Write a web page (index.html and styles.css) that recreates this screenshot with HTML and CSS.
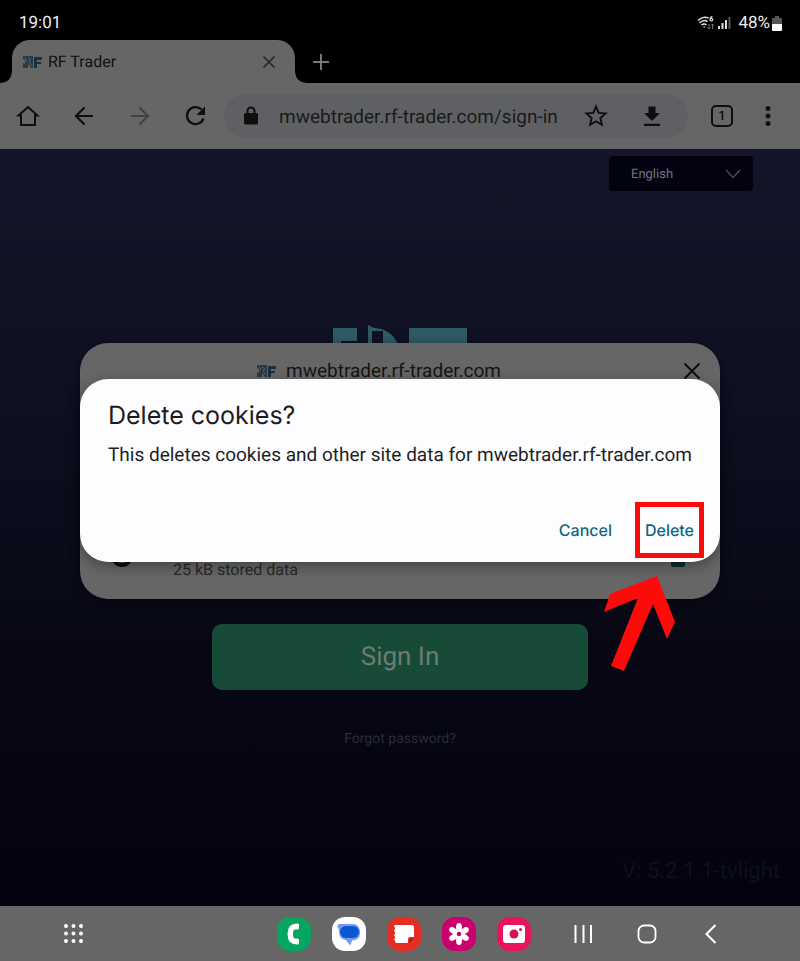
FILE: index.html
```
<!DOCTYPE html>
<html lang="en">
<head>
    <meta charset="UTF-8">
    <meta name="viewport" content="width=device-width, initial-scale=1.0">
    <title>RF Trader</title>
    <link rel="stylesheet" href="styles.css">
</head>
<body>
    <div class="screen">
        <div class="status-bar">
            <span class="clock">19:01</span>
            <div class="status-icons">
                <svg width="18" height="16" viewBox="0 0 18 16" fill="none" stroke="#ddd" stroke-width="1.5">
                    <path d="M1 5.5Q6 0.5 11.5 3M2.5 8Q6.500 4 10.500 6.500M4.500 10.300Q7 8 9.500 10"/>
                    <path d="M6 11.500L7.200 13L8.400 11.500Z" fill="#ddd" stroke="none"/>
                    <path d="M15.500 1.500Q13 1.800 13 4.500M13 4.700a1.300 1.300 0 1 0 2.600 0a1.300 1.300 0 1 0 -2.600 0" stroke-width="1.200"/>
                    <path d="M12 9v5M10.500 12.500L12 14L13.500 12.500M15.500 14V9M14 10.500L15.500 9L17 10.500" stroke="#777" stroke-width="1"/>
                </svg>
                <svg width="14" height="16" viewBox="0 0 14 16">
                    <path d="M1 11h2v3H1zM4.500 8h2v6h-2zM8 5h2v9H8z" fill="#ddd"/>
                    <path d="M11.500 2h2v12h-2z" fill="#555"/>
                </svg>
                <span class="battery-level">48%</span>
                <svg width="10" height="15" viewBox="0 0 10 15">
                    <path d="M3 0h4v2h2q1 0 1 1v5H0V3q0-1 1-1h2z" fill="#555"/>
                    <path d="M0 8h10v6q0 1-1 1H1q-1 0-1-1z" fill="#fff"/>
                </svg>
            </div>
        </div>

        <div class="tab-strip">
            <div class="tab">
                <svg class="favicon" width="20" height="12" viewBox="0 0 20 12">
                    <path d="M0 0h10v12H8L5 8v4H0V7l2 1V4L0 3z" fill="#2c3944"/>
                    <path d="M2 2l2 4M5 2l3 2-2 2 3 4" stroke="#56616a" fill="none"/>
                    <path d="M11 1h8v3h-5v2h4v2h-4v4h-3z" fill="#16323f"/>
                </svg>
                <span class="tab-title">RF Trader</span>
                <button class="icon-btn tab-close" aria-label="Close tab">
                    <svg width="24" height="24" viewBox="0 0 24 24" fill="none" stroke="#252525" stroke-width="1.600"><path d="M6.500 6.500L17.500 17.500M17.500 6.500L6.500 17.500"/></svg>
                </button>
            </div>
            <button class="icon-btn" aria-label="New tab">
                <svg width="24" height="24" viewBox="0 0 24 24" fill="none" stroke="#777" stroke-width="2"><path d="M12 4v16M4 12h16"/></svg>
            </button>
        </div>

        <div class="toolbar">
            <div class="toolbar-nav">
                <button class="icon-btn" aria-label="Home">
                    <svg width="24" height="24" viewBox="0 0 24 24" fill="none" stroke="#0e0e0e" stroke-width="2"><path d="M2.500 11.500L12 3l9.500 8.500H19V21H5V11.500z"/></svg>
                </button>
                <button class="icon-btn" aria-label="Back">
                    <svg width="24" height="24" viewBox="0 0 24 24" fill="none" stroke="#0e0e0e" stroke-width="2.200"><path d="M21 12H4M12.500 3.500L4 12l8.500 8.500"/></svg>
                </button>
                <button class="icon-btn" aria-label="Forward">
                    <svg width="24" height="24" viewBox="0 0 24 24" fill="none" stroke="#414141" stroke-width="2"><path d="M3 12h17M11.500 3.500L20 12l-8.500 8.500"/></svg>
                </button>
                <button class="icon-btn" aria-label="Reload">
                    <svg width="24" height="24" viewBox="0 0 24 24"><path d="M17.500 5.500A8.500 8.500 0 1 0 19.500 14.500" fill="none" stroke="#0e0e0e" stroke-width="2.300"/><path d="M21 2.500v8.500H12.500z" fill="#0e0e0e"/></svg>
                </button>
            </div>
            <div class="omnibox">
                <svg width="24" height="24" viewBox="0 0 24 24"><path d="M6.500 9h11q1.500 0 1.500 1.500v8.500q0 1.500-1.500 1.500h-11q-1.500 0-1.500-1.500V10.500q0-1.500 1.500-1.500z" fill="#0e0e0e"/><path d="M8.500 9V7a3.500 3.500 0 0 1 7 0V9" fill="none" stroke="#0e0e0e" stroke-width="2"/></svg>
                <input class="url" type="text" aria-label="Address" value="mwebtrader.rf-trader.com/sign-in">
                <button class="icon-btn" aria-label="Bookmark">
                    <svg width="24" height="24" viewBox="0 0 24 24" fill="none" stroke="#0e0e0e" stroke-width="1.900"><path d="M12 2.500l2.700 6.400 6.900.6-5.200 4.600 1.500 6.800L12 17.300l-5.900 3.600 1.500-6.800-5.200-4.600 6.900-.6z"/></svg>
                </button>
                <button class="icon-btn" aria-label="Download">
                    <svg width="24" height="24" viewBox="0 0 24 24" fill="#0e0e0e"><path d="M8.500 2.500h7V9H20l-8 8-8-8h4.500zM4 19.700h16v2.200H4z"/></svg>
                </button>
            </div>
            <button class="icon-btn tab-count" aria-label="Open tabs">1</button>
            <button class="icon-btn" aria-label="Menu">
                <svg width="24" height="24" viewBox="0 0 24 24" fill="#0e0e0e"><circle cx="12" cy="4.500" r="2.500"/><circle cx="12" cy="12" r="2.500"/><circle cx="12" cy="19.500" r="2.500"/></svg>
            </button>
        </div>

        <main class="page">
            <div class="language">
                <select class="language-select" aria-label="Language">
                    <option>English</option>
                </select>
                <svg class="language-arrow" width="16" height="10" viewBox="0 0 16 10" fill="none" stroke="#4a4a55" stroke-width="1.500"><path d="M1 1l7 7.500L15 1"/></svg>
            </div>
            <svg class="logo" width="134" height="60" viewBox="0 0 134 60" fill="#305b66">
                <path d="M0 3h24v13H8v6h12v10H8v26H0z"/>
                <path d="M35 -1Q38 3 42 3Q62 5 66 24L66 60H50V6H39V60H35z"/>
                <path d="M76 3h58v15H112v42H96V18H76z"/>
            </svg>
            <button class="sign-in">Sign In</button>
            <a class="forgot" href="#">Forgot password?</a>
            <div class="version">V: 5.2.1.1-tvlight</div>
        </main>

        <nav class="taskbar">
            <button class="icon-btn all-apps" aria-label="All apps">
                <svg width="24" height="24" viewBox="0 0 24 24" fill="#fff"><circle cx="4" cy="4" r="2"/><circle cx="11.500" cy="4" r="2"/><circle cx="19" cy="4" r="2"/><circle cx="4" cy="11.500" r="2"/><circle cx="11.500" cy="11.500" r="2"/><circle cx="19" cy="11.500" r="2"/><circle cx="4" cy="19" r="2"/><circle cx="11.500" cy="19" r="2"/><circle cx="19" cy="19" r="2"/></svg>
            </button>
            <div class="apps">
                <button class="app app-phone" aria-label="Phone">
                    <svg width="34" height="34" viewBox="0 0 34 34"><path d="M20 6.500h.5q1.500 0 1.500 1.500v3q0 1.500-1.500 1.500H18q-2 0-2 4.500t2 4.500h2.500q1.500 0 1.500 1.500v3q0 1.500-1.500 1.500H20q-9.500 0-9.500-10.500T20 6.500z" fill="#fff"/></svg>
                </button>
                <button class="app app-messages" aria-label="Messages">
                    <svg width="34" height="34" viewBox="0 0 34 34"><path d="M7 7h14q4 0 6 3.500 1.500 3 1 6.500-1 6-8 6.500l-1.500 5-5-5.500Q7 22 7 14q0-2-1.500-4.500Q5 7.500 7 7z" fill="#6f9df0"/><rect x="8" y="9" width="19" height="12" rx="6" fill="#0b57d0"/></svg>
                </button>
                <button class="app app-notes" aria-label="Notes">
                    <svg width="34" height="34" viewBox="0 0 34 34"><path d="M10 8h15q2 0 2 2v10h-4q-2 0-2 2v4H10q-2 0-2-2 0-1-1-1.500 0-1 1-1v-2q-1-.500-1-1.500t1-1v-2q-1-.500-1-1.500t1-1v-2q-1-.500-1-1.500t1-1 2-.500z" fill="#fff"/><path d="M22.500 26v-3q0-1.500 1.500-1.500h3z" fill="#a71a12"/></svg>
                </button>
                <button class="app app-gallery" aria-label="Gallery">
                    <svg width="34" height="34" viewBox="0 0 34 34"><g fill="#fff"><ellipse cx="17" cy="10.500" rx="3" ry="4.500"/><ellipse cx="17" cy="10.500" rx="3" ry="4.500" transform="rotate(60 17 17)"/><ellipse cx="17" cy="10.500" rx="3" ry="4.500" transform="rotate(120 17 17)"/><ellipse cx="17" cy="10.500" rx="3" ry="4.500" transform="rotate(180 17 17)"/><ellipse cx="17" cy="10.500" rx="3" ry="4.500" transform="rotate(240 17 17)"/><ellipse cx="17" cy="10.500" rx="3" ry="4.500" transform="rotate(300 17 17)"/><circle cx="17" cy="17" r="4"/></g><circle cx="17" cy="17" r="2.200" fill="#c4006b"/></svg>
                </button>
                <button class="app app-camera" aria-label="Camera">
                    <svg width="34" height="34" viewBox="0 0 34 34"><rect x="6" y="8" width="22" height="18" rx="3" fill="#fff"/><circle cx="17" cy="17" r="4.500" fill="#d3124e"/><circle cx="23.500" cy="12.500" r="1.500" fill="#d3124e"/></svg>
                </button>
            </div>
            <div class="system-nav">
                <button class="icon-btn" aria-label="Recents">
                    <svg width="24" height="24" viewBox="0 0 24 24" fill="none" stroke="#fff" stroke-width="2"><path d="M4.500 3v18M12.500 3v18M20 3v18"/></svg>
                </button>
                <button class="icon-btn" aria-label="Home screen">
                    <svg width="24" height="24" viewBox="0 0 24 24" fill="none" stroke="#fff" stroke-width="1.800"><rect x="3.500" y="3.500" width="17" height="17" rx="5.500"/></svg>
                </button>
                <button class="icon-btn" aria-label="Go back">
                    <svg width="24" height="24" viewBox="0 0 24 24" fill="none" stroke="#fff" stroke-width="2"><path d="M16.500 3L7.500 12l9 9"/></svg>
                </button>
            </div>
        </nav>

        <div class="overlay">
            <section class="site-panel">
                <div class="site-header">
                    <div class="site-name">
                        <svg class="favicon" width="20" height="12" viewBox="0 0 20 12">
                            <path d="M0 0h10v12H8L5 8v4H0V7l2 1V4L0 3z" fill="#2c3944"/>
                            <path d="M2 2l2 4M5 2l3 2-2 2 3 4" stroke="#56616a" fill="none"/>
                            <path d="M11 1h8v3h-5v2h4v2h-4v4h-3z" fill="#16323f"/>
                        </svg>
                        <span>mwebtrader.rf-trader.com</span>
                    </div>
                    <button class="icon-btn" aria-label="Close">
                        <svg width="24" height="24" viewBox="0 0 24 24" fill="none" stroke="#0e0e0e" stroke-width="2"><path d="M4.500 4.500L19.500 19.500M19.500 4.500L4.500 19.500"/></svg>
                    </button>
                </div>
                <div class="site-row">
                    <svg width="24" height="24" viewBox="0 0 24 24" fill="none" stroke="#0e0e0e" stroke-width="4"><circle cx="12" cy="12" r="9"/></svg>
                    <span class="site-data">25 kB stored data</span>
                    <button class="icon-btn" aria-label="Delete stored data">
                        <svg width="24" height="24" viewBox="0 0 24 24" fill="#0a2b36"><path d="M5 6h14v15q0 2-2 2H7q-2 0-2-2zM4 2h16v2.500H4z"/></svg>
                    </button>
                </div>
            </section>

            <div class="dialog" role="dialog" aria-labelledby="dialog-title">
                <h1 id="dialog-title" class="dialog-title">Delete cookies?</h1>
                <p class="dialog-text">This deletes cookies and other site data for mwebtrader.rf-trader.com</p>
                <div class="dialog-actions">
                    <button class="text-btn">Cancel</button>
                    <div class="highlight">
                        <button class="text-btn">Delete</button>
                        <svg class="arrow" width="72" height="96" viewBox="0 0 72 96"><path d="M53 0L71 46 63 63 49 28 20 95 7 90 34 22 0 36 6 18z" fill="#ff0a0a"/></svg>
                    </div>
                </div>
            </div>
        </div>
    </div>
</body>
</html>
```
FILE: styles.css
```
* { margin: 0; padding: 0; box-sizing: border-box; }
body { font-family: Roboto, "Liberation Sans", sans-serif; background: #000; text-rendering: geometricPrecision; }
button, input, select { font-family: inherit; border: none; background: none; text-rendering: inherit; }
svg { display: block; flex-shrink: 0; }
.screen { position: relative; display: flex; flex-direction: column; min-height: 100vh; }
.icon-btn { width: 24px; height: 24px; flex-shrink: 0; cursor: pointer; }

.status-bar { display: flex; justify-content: space-between; align-items: center; height: 40px; padding: 6px 18px 0 19px; color: #eee; font-size: 17px; }
.status-icons { display: flex; align-items: center; gap: 2px; }
.battery-level { margin-left: 5px; }

.tab-strip { display: flex; align-items: center; gap: 14px; height: 43px; padding-left: 12px; }
.tab { position: relative; display: flex; align-items: center; gap: 5px; flex: 0 1 283px; height: 43px; padding: 0 14px 0 11px; background: #666; border-radius: 18px 18px 0 0; }
.tab::before, .tab::after { content: ''; position: absolute; bottom: 0; width: 10px; height: 10px; }
.tab::before { right: 100%; background: radial-gradient(circle at 0 0, transparent 9px, #666 10px); }
.tab::after { left: 100%; background: radial-gradient(circle at 100% 0, transparent 9px, #666 10px); }
.tab-title { flex: 1; font-size: 16px; color: #111; }

.toolbar { display: flex; align-items: center; gap: 23px; height: 66px; padding: 0 20px 0 16px; background: #666; }
.toolbar-nav { display: flex; gap: 32px; }
.omnibox { display: flex; align-items: center; flex: 1; min-width: 0; gap: 16px; height: 44px; padding: 0 24px 0 15px; margin-left: -7px; border-radius: 22px; background: #5f6064; }
.omnibox .icon-btn + .icon-btn { margin-left: 16px; }
.url { flex: 1; min-width: 0; font-size: 19px; color: #1a1a1a; outline: none; }
.tab-count { width: 22px; height: 22px; border: 2px solid #0e0e0e; border-radius: 5px; font-size: 13px; font-weight: 500; color: #0e0e0e; }

.page { display: flex; flex-direction: column; align-items: center; flex: 1; background: linear-gradient(#141528, #0e0f20 35%, #080815 65%, #030210); }
.language { position: relative; align-self: flex-end; width: 144px; margin: 7px 47px 0 0; }
.language-select { width: 100%; height: 35px; padding: 2px 0 0 22px; appearance: none; border-radius: 4px; background: #030210; color: #74747c; font-size: 13px; }
.language-arrow { position: absolute; right: 12px; top: 13px; pointer-events: none; }
.logo { margin-top: 134px; }
.sign-in { width: 47%; height: 66px; margin-top: 239px; border-radius: 10px; background: #184b37; color: #6c7b74; font-size: 26px; cursor: pointer; }
.forgot { margin-top: 40px; font-size: 14px; line-height: 18px; color: #2b2b3a; text-decoration: none; }
.version { align-self: flex-end; margin: auto 20px 20px 0; font-size: 22px; line-height: 28px; color: #0f0f20; }

.taskbar { display: flex; align-items: center; height: 55px; padding: 0 77px 0 62px; background: #666; }
.all-apps { margin-right: auto; }
.apps { display: flex; gap: 21px; margin-right: 40px; }
.app { width: 34px; height: 34px; border-radius: 13px; cursor: pointer; }
.app-phone { background: #05a562; }
.app-messages { background: #fff; }
.app-notes { background: #e52d22; }
.app-gallery { background: #c9006e; }
.app-camera { background: #ea1459; }
.system-nav { display: flex; gap: 40px; }

/* both cards share one cell, the dialog sits on top */
.overlay { position: absolute; inset: 0; display: grid; grid-template-columns: 80%; place-content: center; align-items: center; padding-bottom: 20px; }
.site-panel, .dialog { grid-area: 1 / 1; }
.site-panel { display: flex; flex-direction: column; justify-content: space-between; min-height: 256px; padding: 16px 16px 17px; border-radius: 28px; background: #666; box-shadow: 0 2px 12px rgba(0,0,0,0.4); }
.site-header { display: flex; align-items: center; gap: 18px; }
.site-name { display: flex; flex: 1; justify-content: center; align-items: center; gap: 9px; font-size: 19px; line-height: 24px; color: #151515; }
.site-row { display: flex; align-items: center; gap: 39px; padding: 0 14px; }
.site-data { flex: 1; padding-top: 28px; font-size: 16px; line-height: 24px; color: #282828; }

.dialog { padding: 20px 16px 4px 28px; border-radius: 28px; background: #fdfdff; box-shadow: 0 4px 14px rgba(0,0,0,0.35); }
.dialog-title { font-family: Inter, sans-serif; font-size: 25px; font-weight: 400; line-height: 34px; color: #1d1b20; }
.dialog-text { margin-top: 10px; font-size: 19px; line-height: 24px; color: #1f1f24; }
.dialog-actions { display: flex; justify-content: flex-end; align-items: center; gap: 18px; margin-top: 35px; }
.text-btn { height: 46px; padding: 0 5px; font-family: Inter, sans-serif; font-size: 16px; font-weight: 500; color: #0c6780; cursor: pointer; }
.highlight { position: relative; border: 5px solid #ff0a0a; }
.arrow { position: absolute; top: 69px; left: -36px; pointer-events: none; }
```
